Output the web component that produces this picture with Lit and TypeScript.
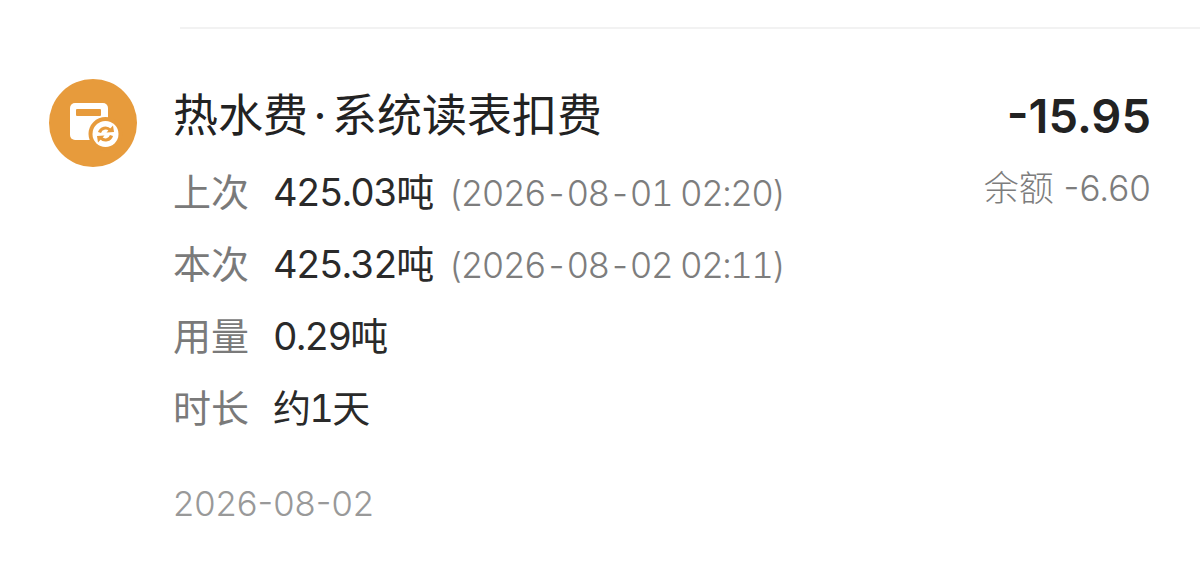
import { LitElement, html, css } from 'lit';
import { customElement } from 'lit/decorators.js';

const ROWS = [
  { label: '上次', value: '425.03吨', time: '(2026-08-01 02:20)' },
  { label: '本次', value: '425.32吨', time: '(2026-08-02 02:11)' },
  { label: '用量', value: '0.29吨', time: '' },
  { label: '时长', value: '约1天', time: '' },
];

@customElement('app-root')
export class AppRoot extends LitElement {
  static styles = css`
    :host {
      display: block;
      height: 562px;
      overflow: hidden;
      background: #fff;
      font-family: Inter, 'Noto Sans CJK SC', sans-serif;
    }

    .divider {
      height: 2px;
      margin: 27px 0 0 180px;
      background: #f2f2f2;
    }

    .record {
      display: flex;
      padding: 50px 49px 0 49px;
    }

    .icon {
      flex: none;
      width: 88px;
      height: 88px;
      border-radius: 50%;
      background: #e79b3c;
    }

    .icon svg {
      display: block;
    }

    .main {
      flex: 1;
      margin-left: 36px;
    }

    .title {
      font-size: 45px;
      line-height: 72px;
      color: #222;
      margin: 1px 0 4px;
      white-space: nowrap;
    }

    .dot {
      margin: 0 5.5px;
    }

    .row {
      display: flex;
      align-items: baseline;
      height: 72px;
      line-height: 72px;
      font-size: 38px;
      font-variant-numeric: tabular-nums;
      white-space: nowrap;
    }

    .label {
      width: 100px;
      color: #7a7a7a;
    }

    .value {
      color: #2a2a2a;
      letter-spacing: -1.7px;
    }

    .time {
      margin-left: 16px;
      color: #7d7d7d;
      font-size: 35px;
      font-weight: 300;
      letter-spacing: -1.5px;
    }

    .date {
      margin-top: 23px;
      font-size: 34.6px;
      font-weight: 300;
      line-height: 72px;
      color: #999;
    }

    .side {
      text-align: right;
      white-space: nowrap;
    }

    .amount {
      font-size: 47px;
      font-weight: 600;
      line-height: 72px;
      color: #222;
      margin-top: 1px;
    }

    .balance {
      font-size: 35px;
      font-weight: 300;
      line-height: 72px;
      color: #7d7d7d;
    }
  `;

  render() {
    return html`
      <div class="divider"></div>
      <div class="record">
        <div class="icon">
          <svg width="88" height="88" viewBox="0 0 88 88">
            <rect x="21" y="24" width="38" height="37" rx="5" fill="#fff" />
            <rect x="27" y="30" width="25" height="7" rx="1" fill="#e79b3c" />
            <circle cx="56.5" cy="55" r="17" fill="#e79b3c" />
            <circle cx="56.5" cy="55" r="13" fill="#fff" />
            <path d="M50.500 53.500a6.200 6.200 0 0 1 10.500-2.500" fill="none" stroke="#e79b3c" stroke-width="3.200" />
            <path d="M62.500 56.500a6.200 6.200 0 0 1-10.500 2.500" fill="none" stroke="#e79b3c" stroke-width="3.200" />
            <path d="M57.500 53.500l7.500-.5-1-6.500z" fill="#e79b3c" />
            <path d="M55.500 56.500l-7.500.5 1 6.500z" fill="#e79b3c" />
          </svg>
        </div>
        <div class="main">
          <div class="title">热水费<span class="dot">·</span>系统读表扣费</div>
          ${ROWS.map(
            (r) => html`
              <div class="row">
                <span class="label">${r.label}</span>
                <span class="value">${r.value}</span>
                ${r.time ? html`<span class="time">${r.time}</span>` : ''}
              </div>
            `,
          )}
          <div class="date">2026-08-02</div>
        </div>
        <div class="side">
          <div class="amount">-15.95</div>
          <div class="balance">余额 -6.60</div>
        </div>
      </div>
    `;
  }
}
